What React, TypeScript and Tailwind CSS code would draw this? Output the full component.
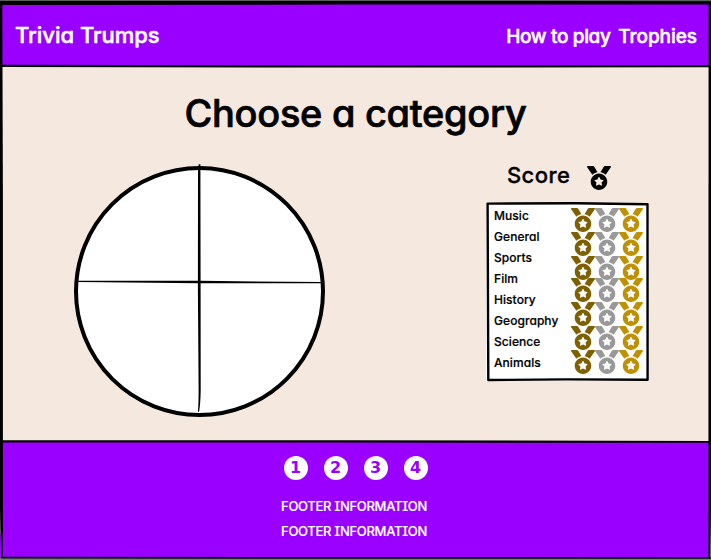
import React from "react";
import { FaMedal } from "react-icons/fa";

const categories = ["Music", "General", "Sports", "Film", "History", "Geography", "Science", "Animals"];
const medalRows = ["h-6", "h-6", "h-[22px]", "h-6", "h-6", "h-6", "h-6"];

function FrameStrokes() {
  return (
    <svg className="pointer-events-none absolute inset-0" width="711" height="560" viewBox="0 0 711 560">
      <path d="M0 0H711V1.5H0Z" fill="#59605c" />
      <path d="M0 508L2 508V530L0 535Z" fill="#8b8b8b" />
      <path d="M709 510H711V560H0V558H709Z" fill="#7c7c7c" />
      <path d="M0 1L350 .9L711 1.2V4.4L350 4.6L0 5Z" />
      <path d="M0 2H2.3L2.9 200V557H1.2L0 508Z" />
      <path d="M708.6 2H711V508L710 558H708.4Z" />
      <path d="M1 556.8L711 557.2V558.8L1 558.6Z" />
      <path d="M2 64.8L350 65.5L710 65.2V67.2L350 67.6L2 67Z" />
      <path d="M2 440.2L350 440.3L710 441V442.8L350 442.6L2 442.6Z" />
    </svg>
  );
}

function Wheel() {
  return (
    <svg className="block" width="252" height="254" viewBox="74 164 252 254">
      <circle cx="199.5" cy="291.5" r="123.5" fill="#fff" stroke="#000" strokeWidth="4" />
      <path d="M198.8 164.3L200.4 164.3L200.6 290L200.7 390Q200.5 404 199 412L198 411.5Q198.8 400 198.6 385L197.9 290L198 168Z" />
      <path d="M78 280.7L200 280.8L322 282.1V283.3L200 283.2L78 282Z" />
    </svg>
  );
}

export default function App() {
  return (
    <div className="relative flex h-[560px] w-[711px] flex-col overflow-hidden bg-[#f5e9df] font-['Inter',sans-serif] text-black [font-feature-settings:'cv11','cv08']">
      <header className="flex h-[66px] items-center justify-between bg-[#9900ff] px-[15px] pt-[5px] font-medium text-white [-webkit-text-stroke:0.5px]">
        <h1 className="text-[22px] tracking-[-0.03px]">Trivia Trumps</h1>
        <nav className="flex gap-2 pt-[3px] text-[19px]">
          <span className="w-[104px] tracking-[-0.35px] whitespace-nowrap">How to play</span>
          <span className="-mr-px tracking-[-0.05px]">Trophies</span>
        </nav>
      </header>
      <main className="flex h-[375px] flex-col">
        <h2 className="mt-[23px] text-center text-[38px] leading-[48px] font-medium tracking-[-0.3px] [-webkit-text-stroke:0.7px]">Choose a category</h2>
        <div className="flex justify-between pr-[62px] pl-[74px]">
          <div className="mt-[27px]">
            <Wheel />
          </div>
          <section className="mt-[23px] w-[163px]">
            <div className="flex h-9 items-center pl-[21px] text-[22px] font-medium">
              <span className="-mt-[5px] w-20 tracking-[0.4px] [-webkit-text-stroke:0.3px]">Score</span>
              <FaMedal className="size-6" />
            </div>
            <div className="relative mt-2 flex h-[177px] justify-between bg-white pr-[6px] pl-2">
              <svg className="pointer-events-none absolute -top-1 left-0" width="163" height="183">
                <path d="M1.6 3.6L90 3.2L161.5 4.3L161.6 179.8L80 179.4L2.3 180Z" fill="none" stroke="#000" strokeWidth="2.4" strokeLinejoin="round" />
              </svg>
              <ul className="pt-px text-[12px] leading-[21px] font-medium tracking-[0.06px] [-webkit-text-stroke:0.2px]">
                {categories.map((name) => (
                  <li key={name}>{name}</li>
                ))}
              </ul>
              <div className="mt-1">
                {medalRows.map((height, i) => (
                  <div key={i} className={"flex " + height}>
                    <FaMedal className="size-6 shrink-0 text-[#7f6000]" />
                    <FaMedal className="size-6 shrink-0 text-[#999999]" />
                    <FaMedal className="size-6 shrink-0 text-[#bf9000]" />
                  </div>
                ))}
              </div>
            </div>
          </section>
        </div>
      </main>
      <footer className="flex h-[119px] flex-col items-center bg-[#9900ff] pt-[15px] text-white">
        <div className="flex gap-4">
          {[1, 2, 3, 4].map((n) => (
            <span key={n} className="flex size-6 items-center justify-center rounded-full bg-white font-['DejaVu_Sans',sans-serif] text-[16px] font-bold text-[#9900ff]">
              {n}
            </span>
          ))}
        </div>
        <p className="mt-[14px] mr-[3px] text-[13px] leading-[25px] font-medium tracking-[-0.3px] [-webkit-text-stroke:0.2px]">FOOTER INFORMATION</p>
        <p className="mr-[3px] text-[13px] leading-[25px] font-medium tracking-[-0.3px] [-webkit-text-stroke:0.2px]">FOOTER INFORMATION</p>
      </footer>
      <FrameStrokes />
    </div>
  );
}
